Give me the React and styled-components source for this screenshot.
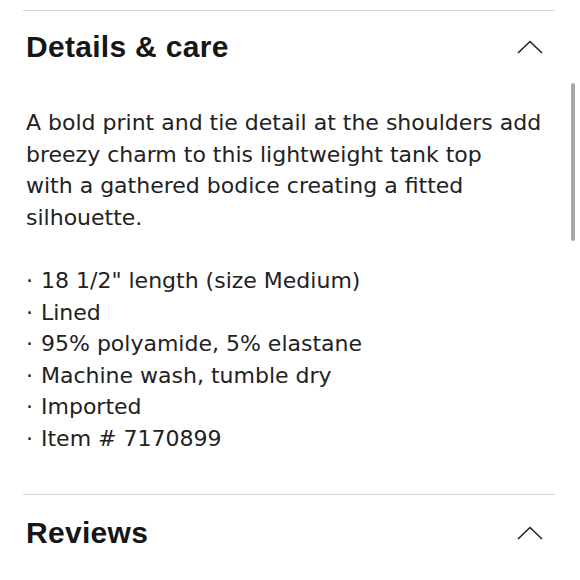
import React from "react";
import styled, { createGlobalStyle } from "styled-components";

const Global = createGlobalStyle`
  html, body { margin: 0; padding: 0; background: #fff; }
  body { width: 580px; height: 580px; overflow: hidden; }
`;

const Page = styled.div`
  position: relative;
  width: 580px;
  height: 580px;
  background: #fff;
  padding: 10px 25px 0 23px;
  box-sizing: border-box;
  color: #1b1b1b;
`;

const Section = styled.section`
  border-top: 1.5px solid #d6d6d6;
`;

const Header = styled.div`
  display: flex;
  align-items: center;
  justify-content: space-between;
  height: ${(p) => (p.$tall ? 76 : 72)}px;
  padding: 0 12px 0 3px;
`;

const Title = styled.h2`
  margin: 0;
  font-family: "Liberation Sans", Arial, sans-serif;
  font-weight: 700;
  font-size: 30px;
  letter-spacing: 0.3px;
  color: #161616;
`;

const Body = styled.div`
  padding: 24px 0 40px 3px;
  font-family: "DejaVu Sans", sans-serif;
  font-size: 22px;
  line-height: 31.5px;
  color: #222;
`;

const Para = styled.p`
  margin: 0 0 32px;
`;

const List = styled.ul`
  margin: 0;
  padding: 0;
  list-style: none;
`;

const Item = styled.li`
  display: flex;
  gap: 8px;
  &::before {
    content: "·";
  }
`;

const Scrollbar = styled.div`
  position: absolute;
  right: 5px;
  top: 83px;
  width: 4px;
  height: 158px;
  border-radius: 2px;
  background: #a8a8a8;
`;

const Chevron = () => (
  <svg width="26" height="14" viewBox="0 0 26 14" fill="none">
    <path d="M1 13 L13 1.5 L25 13" stroke="#222" strokeWidth="1.6" />
  </svg>
);

export default function App() {
  return (
    <Page>
      <Global />
      <Section>
        <Header>
          <Title>Details &amp; care</Title>
          <Chevron />
        </Header>
        <Body>
          <Para>
            A bold print and tie detail at the shoulders add
            <br />
            breezy charm to this lightweight tank top
            <br />
            with a gathered bodice creating a fitted
            <br />
            silhouette.
          </Para>
          <List>
            <Item>18 1/2" length (size Medium)</Item>
            <Item>Lined</Item>
            <Item>95% polyamide, 5% elastane</Item>
            <Item>Machine wash, tumble dry</Item>
            <Item>Imported</Item>
            <Item>Item # 7170899</Item>
          </List>
        </Body>
      </Section>
      <Section>
        <Header $tall>
          <Title>Reviews</Title>
          <Chevron />
        </Header>
      </Section>
      <Scrollbar />
    </Page>
  );
}
